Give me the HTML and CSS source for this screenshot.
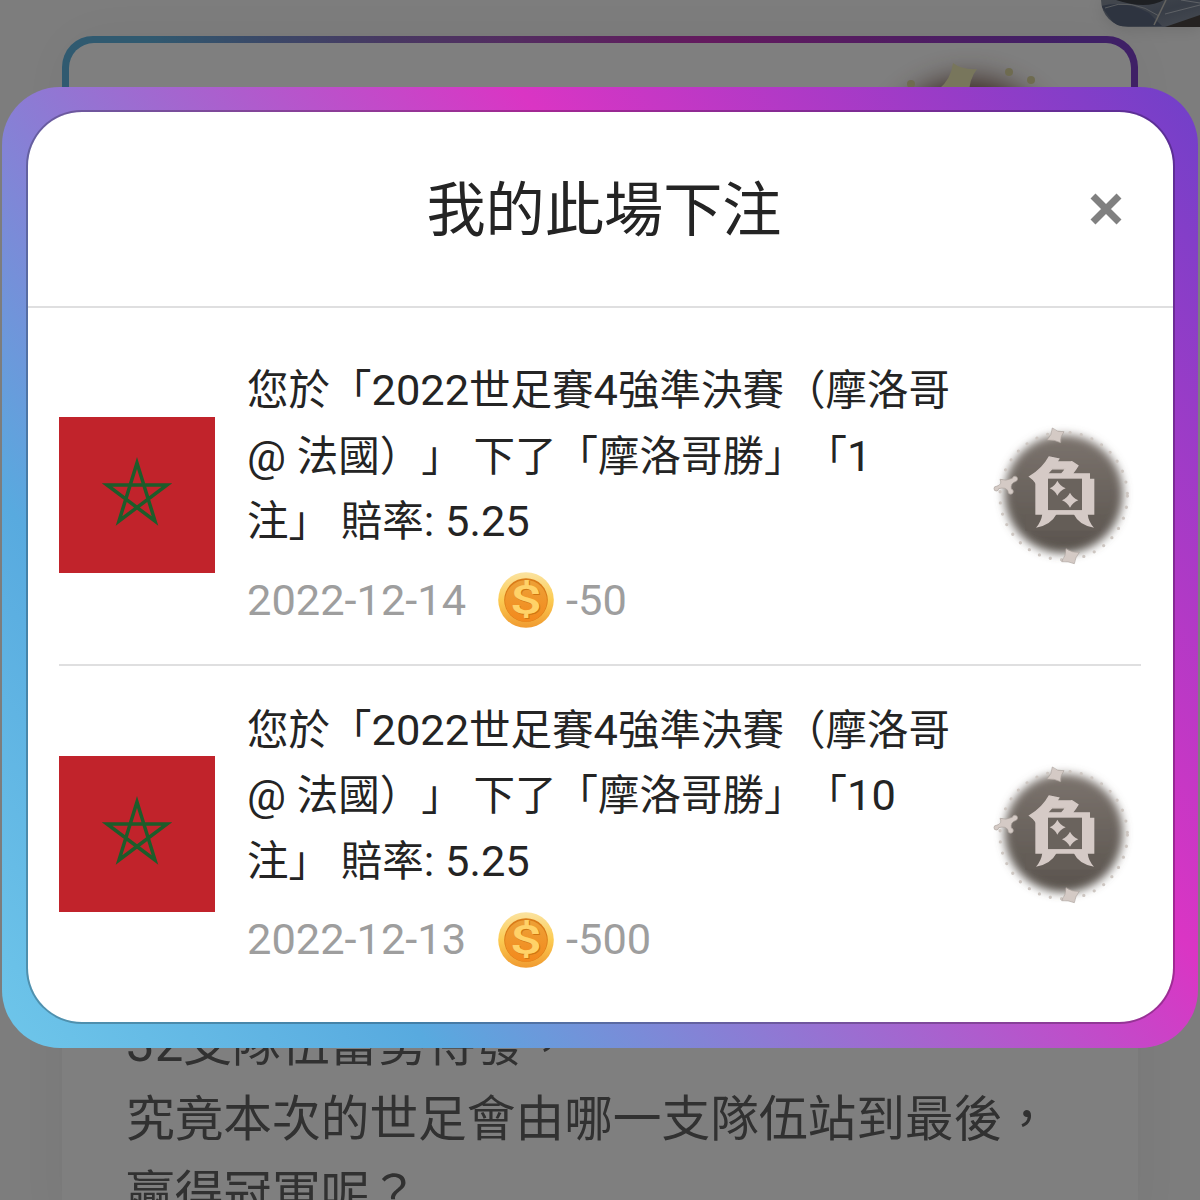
FILE: index.html
```
<!DOCTYPE html>
<html lang="zh-Hant">
<head>
<meta charset="utf-8">
<title>我的此場下注</title>
<link rel="stylesheet" href="styles.css">
</head>
<body>
<svg width="0" height="0" class="defs" aria-hidden="true">
  <defs>
    <filter id="soft" x="-30%" y="-30%" width="160%" height="160%"><feGaussianBlur stdDeviation="15"/></filter>
    <linearGradient id="disc" x1="0" y1="0" x2="0" y2="1"><stop offset="0" stop-color="#7b736d"/><stop offset="1" stop-color="#59534d"/></linearGradient>
    <linearGradient id="rim" x1="0" y1="0" x2="0" y2="1"><stop offset="0" stop-color="#fbe3a0"/><stop offset=".5" stop-color="#fccb52"/><stop offset="1" stop-color="#f09a30"/></linearGradient>
    <linearGradient id="face" x1="0" y1="0" x2="0" y2="1"><stop offset="0" stop-color="#eda137"/><stop offset="1" stop-color="#f3891c"/></linearGradient>
    <linearGradient id="car" x1="0" y1="0" x2="1" y2="1"><stop offset="0" stop-color="#8a929f"/><stop offset=".5" stop-color="#707b8e"/><stop offset="1" stop-color="#8e97a6"/></linearGradient>

    <symbol id="flag" viewBox="0 0 156 156">
      <rect width="156" height="156" fill="#c1232b"/>
      <path d="M78 46 L96 104 L48 68 H108 L60 104 Z" fill="none" stroke="#1d5c2a" stroke-width="3.500" stroke-miterlimit="10"/>
    </symbol>

    <symbol id="coin" viewBox="0 0 56 56">
      <circle cx="28" cy="28" r="27.800" fill="url(#rim)"/>
      <circle cx="28" cy="28" r="21.800" fill="#d97b18"/>
      <circle cx="28" cy="28.800" r="20.900" fill="url(#face)"/>
      <g font-family="Roboto, sans-serif" font-weight="500" font-size="40" text-anchor="middle">
        <text transform="translate(28.800 42.500) scale(1.400 1)" fill="#cf7712">$</text>
        <text transform="translate(28 41.500) scale(1.400 1)" fill="#ffd268">$</text>
      </g>
    </symbol>

    <symbol id="lose" viewBox="0 0 510 510">
      <circle cx="251" cy="252" r="178" fill="url(#disc)" filter="url(#soft)"/>
      <g fill="none" stroke="#cdc6c1" stroke-width="10" stroke-linecap="round" stroke-dasharray="0 34">
        <circle cx="251" cy="258" r="191"/>
      </g>
      <g fill="#d4cac5" stroke="#aaa19b" stroke-width="2">
        <path d="M217 54 Q233 68 252 65 Q240 79 242 98 Q222 88 201 90 Q216 75 217 54 Z"/>
        <path d="M258 416 Q277 429 298 427 Q285 443 283 461 Q264 453 245 455 Q258 437 258 416 Z"/>
        <path d="M60 208 Q78 214 97 205 A8 8 0 1 1 108 214 Q90 220 94 237 A8 8 0 1 1 84 243 Q77 230 56 236 A7 7 0 1 1 49 229 Q68 224 60 208 Z"/>
      </g>
      <text transform="translate(142 334) scale(.970 1)" font-family="Noto Sans CJK TC, sans-serif" font-weight="700" font-size="226" fill="#d5cac6" stroke="#d5cac6" stroke-width="4">負</text>
      <rect x="204" y="206" width="102" height="95" fill="#6a635d"/>
      <rect x="136" y="312" width="226" height="50" fill="#645d57"/>
      <path d="M166 206 H204 V301 H306 V206 H343 V314 H166 Z" fill="#d5cac6"/>
      <path d="M187 312 H230 Q212 346 168 353 Q184 335 187 312 Z M281 312 H323 Q325 335 342 353 Q297 346 281 312 Z" fill="#d5cac6"/>
      <path d="M232 212 Q240 228 257 235 Q240 242 232 257 Q225 242 209 235 Q225 228 232 212 Z M270 248 Q278 264 295 271 Q278 278 270 293 Q262 278 246 271 Q262 264 270 248 Z" fill="#d5cac6"/>
    </symbol>
  </defs>
</svg>

<div class="page">
  <svg class="thumb" viewBox="0 0 99 27" preserveAspectRatio="none">
    <rect width="99" height="27" fill="url(#car)"/>
    <path d="M0 6 Q25 0 48 13 L61 26 H15 Z" fill="#5d6982"/>
    <path d="M4 8 Q30 -3 58 16" fill="none" stroke="#b5bac1" stroke-width="1"/>
    <path d="M15 0 Q45 10 63 0 Z" fill="#3d4047"/>
    <path d="M65 0 L53 25" stroke="#c9c7c0" stroke-width="1.500"/>
    <path d="M64 14 L99 5 M80 0 L99 3" stroke="#bdc3cc" stroke-width="1"/>
    <path d="M64 27 L99 15 V27 Z" fill="#4a4542"/>
  </svg>
  <div class="match-card">
    <div class="match-inner">
      <svg class="match-badge" viewBox="0 0 260 240">
        <circle cx="130" cy="125" r="88" fill="#6c4638" filter="url(#soft)"/>
        <path d="M114 20 Q123 27 138 26 Q130 36 130 52 Q117 44 100 46 Q112 36 114 20 Z" fill="#f1ecb8"/>
        <g fill="#ddd6a0"><circle cx="170" cy="29" r="4"/><circle cx="192" cy="37" r="4"/><circle cx="72" cy="41" r="4"/></g>
      </svg>
    </div>
  </div>
  <div class="story">
    <p><span class="latin">32</span>支隊伍蓄勢待發，<br>究竟本次的世足會由哪一支隊伍站到最後，<br>贏得冠軍呢？</p>
  </div>
</div>

<div class="backdrop">
  <div class="modal-frame">
    <div class="modal">
      <header class="modal-header">
        <h1 class="modal-title">我的此場下注</h1>
        <svg class="close" viewBox="0 0 32 32"><path d="M3 3 L29 29 M29 3 L3 29" stroke="#808080" stroke-width="7"/></svg>
      </header>
      <ul class="bets">
        <li class="bet">
          <svg class="flag"><use href="#flag"/></svg>
          <div class="bet-info">
            <p class="bet-text">您於「<span class="latin">2022</span>世足賽<span class="latin">4</span>強準決賽（摩洛哥<br><span class="latin">@ </span>法國）」<span class="latin"> </span>下了「摩洛哥勝」「<span class="latin">1</span><br>注」<span class="latin"> </span>賠率<span class="latin">: 5.25</span></p>
            <div class="meta"><span>2022-12-14</span><svg class="coin"><use href="#coin"/></svg><span>-50</span></div>
          </div>
          <svg class="result"><use href="#lose"/></svg>
        </li>
        <li class="bet">
          <svg class="flag"><use href="#flag"/></svg>
          <div class="bet-info">
            <p class="bet-text">您於「<span class="latin">2022</span>世足賽<span class="latin">4</span>強準決賽（摩洛哥<br><span class="latin">@ </span>法國）」<span class="latin"> </span>下了「摩洛哥勝」「<span class="latin">10</span><br>注」<span class="latin"> </span>賠率<span class="latin">: 5.25</span></p>
            <div class="meta"><span>2022-12-13</span><svg class="coin"><use href="#coin"/></svg><span>-500</span></div>
          </div>
          <svg class="result"><use href="#lose"/></svg>
        </li>
      </ul>
    </div>
  </div>
</div>
</body>
</html>
```
FILE: styles.css
```
* { box-sizing: border-box; }

body {
  margin: 0;
  height: 1200px;
  overflow: hidden;
  background: #fbfbfb;
  font-family: "Noto Sans CJK TC", sans-serif;
  text-spacing-trim: space-all;
}

h1, p, ul { margin: 0; padding: 0; }
ul { list-style: none; }
svg { display: block; flex: none; }
.defs { position: absolute; }

.latin {
  font-family: Roboto, sans-serif;
  font-size: 1.046em;
  line-height: 1;
  white-space: pre-wrap;
}

/* page behind the dialog */
.page {
  height: 1200px;
  overflow: hidden;
  display: flex;
  flex-direction: column;
}

.thumb {
  align-self: flex-end;
  width: 99px;
  height: 27px;
  border-radius: 0 0 0 30px;
  box-shadow: 0 2px 16px rgba(0, 0, 0, .12);
}

.match-card {
  flex: none;
  margin: 9px 62px 0;
  height: 600px;
  padding: 7px;
  border-radius: 31px;
  background: linear-gradient(90deg, #60b4e0 8%, #7494d0 18%, #9270c4 31%, #c834bc 60%, #7f40cc 94%);
  box-shadow: 0 0 60px rgba(0, 0, 0, .05);
}

.match-inner {
  height: 100%;
  border-radius: 25px;
  background: #fff;
  overflow: hidden;
  display: flex;
  justify-content: flex-end;
}

.match-badge {
  width: 260px;
  height: 240px;
  margin-right: 32px;
}

.story {
  flex: none;
  margin: 0 62px;
  height: 600px;
  padding: 367px 0 0 64px;
  background: #fff;
  box-shadow: 0 0 60px rgba(0, 0, 0, .05);
  color: #626262;
  font-size: 48.700px;
  line-height: 75px;
  white-space: nowrap;
}

/* dialog */
.backdrop {
  position: fixed;
  inset: 0;
  background: rgba(0, 0, 0, .5);
  padding: 87px 2px 0;
}

.modal-frame {
  height: 961px;
  padding: 23px 23px 24px 24px;
  border-radius: 58px;
  background: linear-gradient(52deg, #6ec6ea, #58aadf 22%, #da35c4 65%, #7040c9);
}

.modal {
  height: 100%;
  border: 2px solid rgba(0, 0, 0, .25);
  border-radius: 56px;
  background: #fff;
  background-clip: padding-box;
  color: #242424;
}

.modal-header {
  height: 196px;
  padding: 0 51px 0 90px;
  border-bottom: 2px solid #dfdfe0;
  display: flex;
  align-items: center;
}

.modal-title {
  flex: 1;
  text-align: center;
  font-size: 59.200px;
  font-weight: 400;
  padding-bottom: 8px;
}

.close { width: 32px; height: 32px; margin-top: -1px; }

.bets { padding: 18px 32px 0 31px; }

.bet {
  height: 339.500px;
  display: flex;
  align-items: center;
  border-bottom: 2px solid #dfdfe0;
}

.bet:last-child { border-bottom-color: transparent; }

.flag { width: 156px; height: 156px; }

.bet-info {
  flex: 1;
  margin-left: 32px;
  height: 279px;
}

.bet-text {
  font-size: 41.500px;
  line-height: 65.500px;
  white-space: nowrap;
}

.meta {
  margin-top: 20px;
  display: flex;
  align-items: center;
  font: 43.400px/56px Roboto, sans-serif;
  color: #9e9e9e;
}

.meta span { padding-top: 1px; }

.coin {
  width: 56px;
  height: 56px;
  margin: 0 12px 0 32px;
}

.result {
  width: 170px;
  height: 170px;
  margin-right: -9px;
}
```
